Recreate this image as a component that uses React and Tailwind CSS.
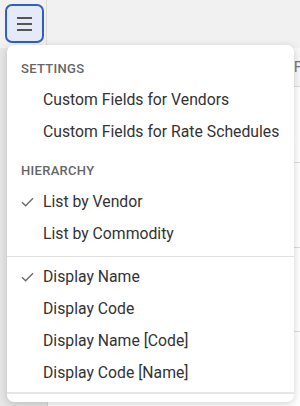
import React from "react";

const Check = () => (
  <svg width="13" height="10" viewBox="0 0 13 10" fill="none" className="shrink-0">
    <path d="M1 5.2 L4.6 8.8 L12 1.2" stroke="#6b6b6b" strokeWidth="1.4" />
  </svg>
);

function Header({ children, className = "" }) {
  return (
    <div className={"h-[30px] flex items-center pl-[14px] text-[13px] font-medium tracking-[0.3px] text-[#666666] " + className}>
      {children}
    </div>
  );
}

function Item({ children, checked }) {
  return (
    <div className="h-8 flex items-center text-[15.75px] text-[#333333]">
      <div className="w-9 pl-[14px] flex items-center">{checked ? <Check /> : null}</div>
      <span>{children}</span>
    </div>
  );
}

export default function App() {
  return (
    <div
      className="relative w-[300px] h-[406px] overflow-hidden bg-[#f1f1f1]"
      style={{ fontFamily: "Roboto, 'Liberation Sans', sans-serif" }}
    >
      <div className="h-12 flex">
        <div className="w-[47px] h-12 border-r border-[#dcdcdc] flex items-start pl-[5px] pt-[4px]">
          <button className="w-[39px] h-[39px] rounded-[7px] border-2 border-[#2f5fc4] bg-[#e4eaf8] flex flex-col items-center justify-center gap-[4px]">
            <span className="block w-[15px] h-[2px] bg-[#555555]" />
            <span className="block w-[15px] h-[2px] bg-[#555555]" />
            <span className="block w-[15px] h-[2px] bg-[#555555]" />
          </button>
        </div>
        <div className="flex-1 bg-[#f1f1f1]" />
      </div>
      <div className="flex h-[358px]">
        <div className="w-[48px] bg-[#e6e6e6] border-r border-[#d8d8d8]" />
        <div className="flex-1 flex flex-col bg-white">
          <div className="h-[39px] bg-[#f7f7f7] border-b border-[#dddddd] flex items-center justify-end overflow-hidden text-[15px] text-[#777]">
            <span className="mr-[-2px]">F</span>
          </div>
          <div className="h-[76px] border-b border-[#dddddd]" />
          <div className="h-[85px] border-b border-[#dddddd]" />
          <div className="h-[84px] border-b border-[#dddddd]" />
          <div className="flex-1" />
        </div>
      </div>

      <div className="absolute left-[7px] top-[45px] w-[287px] h-[357px] bg-white rounded-[7px] shadow-[0_2px_8px_rgba(0,0,0,0.18)] pt-[9px]">
        <Header>SETTINGS</Header>
        <Item>Custom Fields for Vendors</Item>
        <Item>Custom Fields for Rate Schedules</Item>
        <Header className="mt-2">HIERARCHY</Header>
        <Item checked>List by Vendor</Item>
        <Item>List by Commodity</Item>
        <div className="mt-[6px] mb-[4px] h-px bg-[#e0e0e0]" />
        <Item checked>Display Name</Item>
        <Item>Display Code</Item>
        <Item>Display Name [Code]</Item>
        <Item>Display Code [Name]</Item>
        <div className="mt-[3px] h-[2px] bg-[#e6e6e6]" />
      </div>
    </div>
  );
}
